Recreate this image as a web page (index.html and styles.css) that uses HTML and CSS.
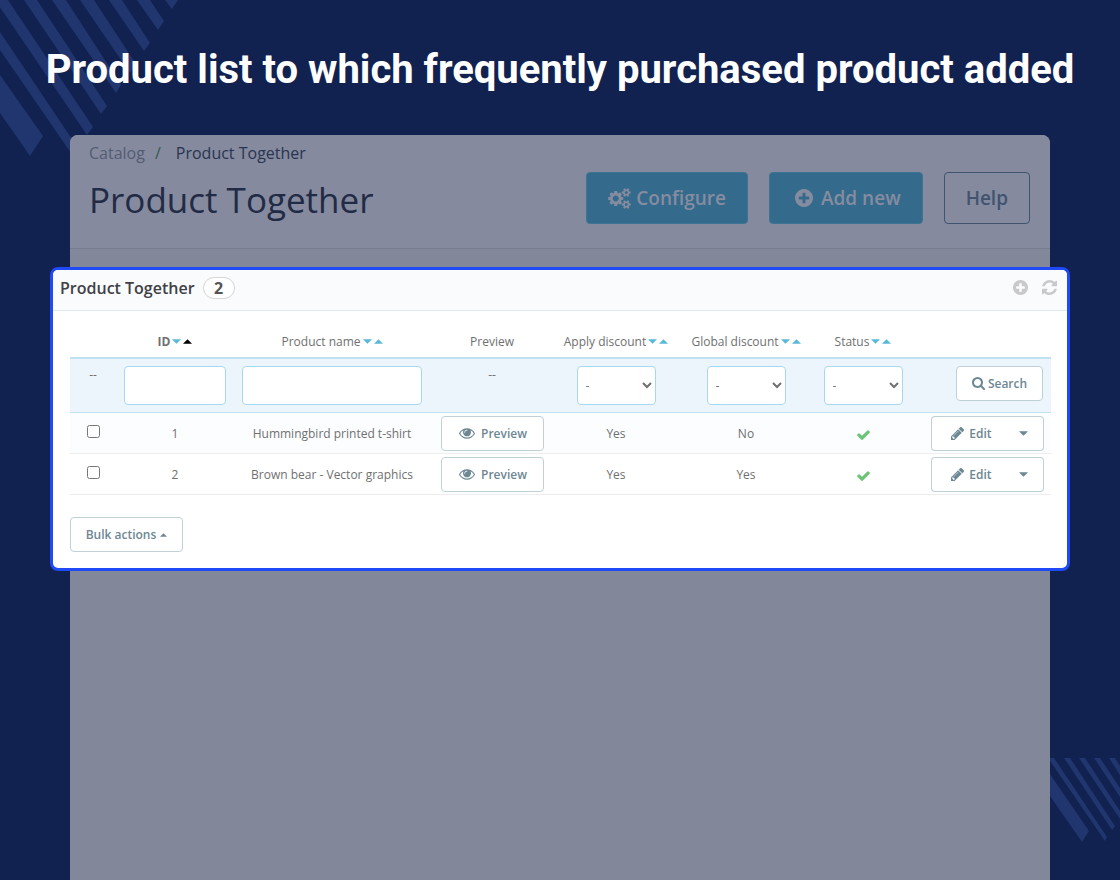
FILE: index.html
```html
<!DOCTYPE html>
<html lang="en">
<head>
<meta charset="utf-8">
<meta name="viewport" content="width=device-width, initial-scale=1">
<title>Product Together</title>
<link rel="stylesheet" href="styles.css">
</head>
<body>
<svg class="defs" width="0" height="0" aria-hidden="true">
  <symbol id="cogs" viewBox="0 0 1920 1792"><path d="M896 896q0-106-75-181t-181-75-181 75-75 181 75 181 181 75 181-75 75-181zm768 512q0-52-38-90t-90-38-90 38-38 90q0 53 37.500 90.500t90.500 37.500 90.500-37.500 37.500-90.500zm0-1024q0-52-38-90t-90-38-90 38-38 90q0 53 37.500 90.500t90.500 37.500 90.500-37.500 37.500-90.500zm-384 421v185q0 10-7 19.500t-16 10.500l-155 24q-11 35-32 76 34 48 90 115 7 11 7 20 0 12-7 19-23 30-82.500 89.500t-78.500 59.500q-11 0-21-7l-115-90q-37 19-77 31-11 108-23 155-7 24-30 24h-186q-11 0-20-7.500t-10-17.500l-23-153q-34-10-75-31l-118 89q-7 7-20 7-11 0-21-8-144-133-144-160 0-9 7-19 10-14 41-53t47-61q-23-44-35-82l-152-24q-10-1-17-9.500t-7-19.500v-185q0-10 7-19.500t16-10.500l155-24q11-35 32-76-34-48-90-115-7-11-7-20 0-12 7-20 22-30 82-89t79-59q11 0 21 7l115 90q34-18 77-32 11-108 23-154 7-24 30-24h186q11 0 20 7.500t10 17.500l23 153q34 10 75 31l118-89q8-7 20-7 11 0 21 8 144 133 144 160 0 8-7 19-12 16-42 54t-45 60q23 48 34 82l152 23q10 2 17 10.500t7 19.500zm640 533v140q0 16-149 31-12 27-30 52 51 113 51 138 0 4-4 7-122 71-124 71-8 0-46-47t-52-68q-20 2-30 2t-30-2q-14 21-52 68t-46 47q-2 0-124-71-4-3-4-7 0-25 51-138-18-25-30-52-149-15-149-31v-140q0-16 149-31 13-29 30-52-51-113-51-138 0-4 4-7 4-2 35-20t59-34 30-16q8 0 46 46.500t52 67.500q20-2 30-2t30 2q51-71 92-112l6-2q4 0 124 70 4 3 4 7 0 25-51 138 17 23 30 52 149 15 149 31zm0-1024v140q0 16-149 31-12 27-30 52 51 113 51 138 0 4-4 7-122 71-124 71-8 0-46-47t-52-68q-20 2-30 2t-30-2q-14 21-52 68t-46 47q-2 0-124-71-4-3-4-7 0-25 51-138-18-25-30-52-149-15-149-31v-140q0-16 149-31 13-29 30-52-51-113-51-138 0-4 4-7 4-2 35-20t59-34 30-16q8 0 46 46.500t52 67.500q20-2 30-2t30 2q51-71 92-112l6-2q4 0 124 70 4 3 4 7 0 25-51 138 17 23 30 52 149 15 149 31z"/></symbol>
  <symbol id="plus" viewBox="0 128 1536 1536"><path d="M1216 960v-128q0-26-19-45t-45-19h-256v-256q0-26-19-45t-45-19h-128q-26 0-45 19t-19 45v256h-256q-26 0-45 19t-19 45v128q0 26 19 45t45 19h256v256q0 26 19 45t45 19h128q26 0 45-19t19-45v-256h256q26 0 45-19t19-45zm320-64q0 209-103 385.500t-279.500 279.500-385.500 103-385.500-103-279.500-279.500-103-385.500 103-385.500 279.500-279.500 385.500-103 385.500 103 279.500 279.500 103 385.500z"/></symbol>
  <symbol id="refresh" viewBox="128 128 1536 1536"><path d="M1639 1056q0 5-1 7-64 268-268 434.500t-478 166.500q-146 0-282.500-55t-243.500-157l-129 129q-19 19-45 19t-45-19-19-45v-448q0-26 19-45t45-19h448q26 0 45 19t19 45-19 45l-137 137q71 66 161 102t187 36q134 0 250-65t186-179q11-17 53-117 8-23 30-23h192q13 0 22.500 9.500t9.500 22.500zm25-800v448q0 26-19 45t-45 19h-448q-26 0-45-19t-19-45 19-45l138-138q-148-137-349-137-134 0-250 65t-186 179q-11 17-53 117-8 23-30 23h-199q-13 0-22.500-9.500t-9.500-22.500v-7q65-268 270-434.500t480-166.500q146 0 284 55.500t245 156.500l130-129q19-19 45-19t45 19 19 45z"/></symbol>
  <symbol id="search" viewBox="64 128 1664 1664"><path d="M1216 832q0-185-131.500-316.500t-316.500-131.500-316.500 131.500-131.500 316.500 131.500 316.500 316.500 131.500 316.500-131.500 131.500-316.500zm512 832q0 52-38 90t-90 38q-54 0-90-38l-343-342q-179 124-399 124-143 0-273.500-55.500t-225-150-150-225-55.500-273.500 55.500-273.500 150-225 225-150 273.500-55.500 273.500 55.500 225 150 150 225 55.500 273.500q0 220-124 399l343 343q37 37 37 90z"/></symbol>
  <symbol id="pencil" viewBox="128 149 1515 1515"><path d="M491 1536l91-91-235-235-91 91v107h128v128h107zm523-928q0-22-22-22-10 0-17 7l-542 542q-7 7-7 17 0 22 22 22 10 0 17-7l542-542q7-7 7-17zm-54-192l416 416-832 832h-416v-416zm683 96q0 53-37 90l-166 166-416-416 166-165q36-38 90-38 53 0 91 38l235 234q37 39 37 91z"/></symbol>
  <symbol id="check" viewBox="121 310 1550 1212"><path d="M1671 566q0 40-28 68l-724 724-136 136q-28 28-68 28t-68-28l-136-136-362-362q-28-28-28-68t28-68l136-136q28-28 68-28t68 28l294 295 656-657q28-28 68-28t68 28l136 136q28 28 28 68z"/></symbol>
  <symbol id="eye" viewBox="0 384 1792 1152"><path d="M1664 960q-152-236-381-353 61 104 61 225 0 185-131.500 316.500t-316.500 131.500-316.500-131.500-131.500-316.500q0-121 61-225-229 117-381 353 133 205 333.500 326.500t434.500 121.500 434.500-121.500 333.500-326.500zm-720-384q0-20-14-34t-34-14q-125 0-214.500 89.500t-89.500 214.500q0 20 14 34t34 14 34-14 14-34q0-86 61-147t147-61q20 0 34-14t14-34zm848 384q0 34-20 69-140 230-376.500 368.500t-499.500 138.500-499.500-139-376.500-368q-20-35-20-69t20-69q140-229 376.500-368t499.500-139 499.500 139 376.500 368q20 35 20 69z"/></symbol>
  <symbol id="down" viewBox="0 0 10 5"><path d="M0 0h10L5 5z"/></symbol>
  <symbol id="up" viewBox="0 0 10 5"><path d="M0 5h10L5 0z"/></symbol>
</svg>

<svg class="stripes stripes-top" width="180" height="160" aria-hidden="true">
  <path d="M165 0h13l-6 9zM137 0h13l14 21-6 9zM109 0h13l28 43-6 8zM80 0h14l42 64-6 9zM52 0h14l55 85-5 8zM24 0h13l70 106-6 8zM-5 0H8l85 127-6 8zM0 32l78 116-5 8L0 50zM0 75l43 61-13 20L0 113z"/>
</svg>
<svg class="stripes stripes-bottom" width="70" height="122" aria-hidden="true">
  <path d="M0 16l39 57-7 11L0 38zM-2 0h6l53 79-2 4zM14 0h6l45 68-3 4zM29 0h6l35 53v8zM44 0h6l20 30v9zM59 0h6l5 8v9z"/>
</svg>

<h1 class="headline">Product list to which frequently purchased product added</h1>

<main class="screen">
  <header class="page-head">
    <nav class="crumbs" aria-label="Breadcrumb">
      <a class="crumb" href="#catalog">Catalog</a><span class="slash">/</span><span>Product Together</span>
    </nav>
    <div class="title-row">
      <h2 class="page-title">Product Together</h2>
      <div class="actions">
        <button class="btn-main configure" type="button"><svg class="icon-cogs"><use href="#cogs"/></svg>Configure</button>
        <button class="btn-main add" type="button"><svg class="icon-add"><use href="#plus"/></svg>Add new</button>
        <button class="btn-main help" type="button">Help</button>
      </div>
    </div>
  </header>

  <section class="card">
    <div class="card-head">
      <h3 class="card-title">Product Together</h3>
      <span class="count">2</span>
      <div class="tools">
        <button class="tool" type="button" aria-label="Add new"><svg class="icon-tool"><use href="#plus"/></svg></button>
        <button class="tool" type="button" aria-label="Refresh list"><svg class="icon-tool"><use href="#refresh"/></svg></button>
      </div>
    </div>
    <div class="card-body">
      <table class="list">
        <colgroup>
          <col class="c-check"><col class="c-id"><col class="c-name"><col class="c-preview"><col class="c-apply"><col class="c-global"><col class="c-status"><col class="c-actions">
        </colgroup>
        <thead>
          <tr class="labels">
            <td></td>
            <th scope="col" class="sorted"><span class="sort">ID <svg class="caret"><use href="#down"/></svg><svg class="caret active"><use href="#up"/></svg></span></th>
            <th scope="col"><span class="sort">Product name <svg class="caret"><use href="#down"/></svg><svg class="caret"><use href="#up"/></svg></span></th>
            <th scope="col">Preview</th>
            <th scope="col"><span class="sort">Apply discount <svg class="caret"><use href="#down"/></svg><svg class="caret"><use href="#up"/></svg></span></th>
            <th scope="col"><span class="sort">Global discount <svg class="caret"><use href="#down"/></svg><svg class="caret"><use href="#up"/></svg></span></th>
            <th scope="col"><span class="sort">Status <svg class="caret"><use href="#down"/></svg><svg class="caret"><use href="#up"/></svg></span></th>
            <td></td>
          </tr>
          <tr class="filters">
            <td>--</td>
            <td><input class="field" type="text" aria-label="Filter by ID"></td>
            <td><input class="field" type="text" aria-label="Filter by product name"></td>
            <td>--</td>
            <td><select class="field pick" aria-label="Filter by apply discount"><option>-</option><option>Yes</option><option>No</option></select></td>
            <td><select class="field pick" aria-label="Filter by global discount"><option>-</option><option>Yes</option><option>No</option></select></td>
            <td><select class="field pick" aria-label="Filter by status"><option>-</option><option>Yes</option><option>No</option></select></td>
            <td class="end"><button class="btn search" type="button"><svg class="icon-search"><use href="#search"/></svg>Search</button></td>
          </tr>
        </thead>
        <tbody>
          <tr>
            <td><input class="tick" type="checkbox" aria-label="Select item 1"></td>
            <td>1</td>
            <td>Hummingbird printed t-shirt</td>
            <td><button class="btn preview" type="button"><svg class="icon-eye"><use href="#eye"/></svg>Preview</button></td>
            <td>Yes</td>
            <td>No</td>
            <td><svg class="icon-check" role="img" aria-label="Enabled"><use href="#check"/></svg></td>
            <td class="end"><div class="split"><button class="btn edit" type="button"><svg class="icon-pencil"><use href="#pencil"/></svg>Edit</button><button class="btn toggle" type="button" aria-label="More actions"><svg class="caret"><use href="#down"/></svg></button></div></td>
          </tr>
          <tr>
            <td><input class="tick" type="checkbox" aria-label="Select item 2"></td>
            <td>2</td>
            <td>Brown bear - Vector graphics</td>
            <td><button class="btn preview" type="button"><svg class="icon-eye"><use href="#eye"/></svg>Preview</button></td>
            <td>Yes</td>
            <td>Yes</td>
            <td><svg class="icon-check" role="img" aria-label="Enabled"><use href="#check"/></svg></td>
            <td class="end"><div class="split"><button class="btn edit" type="button"><svg class="icon-pencil"><use href="#pencil"/></svg>Edit</button><button class="btn toggle" type="button" aria-label="More actions"><svg class="caret"><use href="#down"/></svg></button></div></td>
          </tr>
        </tbody>
      </table>
      <button class="btn bulk" type="button">Bulk actions <svg class="caret small"><use href="#up"/></svg></button>
    </div>
  </section>
</main>
</body>
</html>
```

FILE: styles.css
```css
* { box-sizing: border-box; }

body {
  margin: 0;
  min-height: 100vh;
  display: flex;
  flex-direction: column;
  position: relative;
  background: #112150;
  font-family: "Open Sans", "Noto Sans", sans-serif;
  font-size: 12px;
  color: #707070;
}

h1, h2, h3 { margin: 0; }

button, input, select { font: inherit; color: inherit; }

button { cursor: pointer; }

svg { fill: currentColor; flex: none; }

.defs { position: absolute; }

/* Decorative corners */
.stripes { position: absolute; color: #21366f; }
.stripes-top { left: 0; top: 0; }
.stripes-bottom { right: 0; bottom: 0; }

.headline {
  position: relative;
  padding: 46px 20px 41px;
  font: 700 40px/48px Roboto, sans-serif;
  color: #fff;
  text-align: center;
}

/* Dimmed page behind the card */
.screen {
  position: relative;
  flex: 1;
  margin: 0 70px;
  border-radius: 8px 8px 0 0;
  background: #828799;
}

.page-head {
  padding: 7px 20px 24px 19px;
  border-radius: 8px 8px 0 0;
  border-bottom: 1px solid #777c90;
  background: #858a9e;
}

.crumbs {
  display: flex;
  font-size: 16px;
  line-height: 22px;
  color: #2a3450;
}

.crumb { color: #525d74; text-decoration: none; }
.slash { margin: 0 15px 0 10px; color: #335a50; }

.title-row {
  display: flex;
  justify-content: space-between;
  align-items: center;
  margin-top: 8px;
}

.page-title {
  padding-top: 4px;
  font-size: 35px;
  font-weight: 400;
  line-height: 48px;
  color: #222b45;
}

.actions { display: flex; gap: 21px; }

.btn-main {
  display: flex;
  align-items: center;
  height: 52px;
  padding: 0 21px;
  border: 1px solid #3d7494;
  border-radius: 4px;
  background: #346a8c;
  font-size: 19px;
  font-weight: 600;
  color: #868ca0;
}

.configure { gap: 5px; }
.add { gap: 8px; padding-left: 25px; }
.help { border-color: #40546f; background: none; color: #40546f; }

.icon-cogs { width: 23px; height: 21px; }
.icon-add { width: 18px; height: 18px; }

/* Highlighted card */
.card {
  margin: 18px -20px 0;
  border: 3px solid #1f4af5;
  border-radius: 8px;
  background: #fff;
  overflow: hidden;
}

.card-head {
  display: flex;
  align-items: center;
  height: 41px;
  padding: 0 10px 4px 7px;
  border-bottom: 1px solid #dfe9ee;
  background: #fafbfd;
}

.card-title {
  font-size: 16px;
  font-weight: 600;
  color: #3f4147;
}

.count {
  margin-left: 8px;
  width: 32px;
  height: 22px;
  border: 1px solid #d6d6d6;
  border-radius: 11px;
  background: #fff;
  font-size: 16px;
  font-weight: 700;
  line-height: 20px;
  text-align: center;
  color: #555;
}

.tools { display: flex; gap: 14px; margin-left: auto; padding-bottom: 2px; }

.tool {
  display: flex;
  padding: 0;
  border: 0;
  background: none;
  color: #c9c9c9;
}

.icon-tool { width: 15px; height: 15px; }

.card-body { padding: 16px 16px 16px 17px; }

.list {
  width: 100%;
  border-collapse: separate;
  border-spacing: 0;
  table-layout: fixed;
  text-align: center;
}

.list td, .list th { padding: 0; }

.c-check { width: 46px; }
.c-id { width: 118px; }
.c-preview { width: 124px; }
.c-apply { width: 124px; }
.c-global { width: 136px; }
.c-status { width: 98px; }
.c-actions { width: 139px; }

.list .labels th, .list .labels td {
  height: 32px;
  padding-bottom: 2px;
  border-bottom: 2px solid #bfe1f2;
  font-weight: 400;
}

.list .labels .sorted { font-weight: 700; }

.sort { display: flex; justify-content: center; align-items: center; gap: 2px; }

.caret { width: 9px; height: 5px; color: #57b9d9; }
.active { color: #000; }

.list .filters td {
  padding: 7px 8px;
  border-bottom: 1px solid #bfe1f2;
  background: #ecf5fb;
  vertical-align: top;
}

.field {
  display: block;
  width: 100%;
  height: 39px;
  padding: 0 8px;
  border: 1px solid #a6d8f0;
  border-radius: 4px;
  background: #fff;
}

.pick { width: 79px; padding: 0 4px; margin: 0 auto; }

.btn {
  display: flex;
  align-items: center;
  justify-content: center;
  height: 35px;
  border: 1px solid #bfd0d7;
  border-radius: 4px;
  padding: 0;
  background: #fff;
  font-weight: 600;
  color: #6d8793;
}

.search { width: 87px; margin-left: auto; gap: 3px; }

.list tbody td {
  height: 41px;
  border-bottom: 1px solid #ededed;
}

.list tbody tr:first-child td { background: #fbfdff; }

.list tbody .end { padding-right: 7px; }

.tick { display: block; margin: 0 auto 4px; width: 13px; height: 13px; }

.preview { width: 103px; margin: 0 auto; padding-left: 2px; gap: 6px; }

.split { display: flex; justify-content: flex-end; }

.edit {
  width: 76px;
  padding-left: 4px;
  gap: 5px;
  border-right: 0;
  border-radius: 4px 0 0 4px;
}

.toggle {
  width: 37px;
  padding-right: 4px;
  border-left: 0;
  border-radius: 0 4px 4px 0;
}

.btn .caret { color: inherit; }
.btn .small { width: 7px; height: 4px; }

.icon-search { width: 13px; height: 13px; }
.icon-eye { width: 16px; height: 11px; }
.icon-pencil { width: 13px; height: 13px; }
.icon-check { display: block; width: 13px; height: 10px; margin: 3px auto 0; color: #6cc576; }

.bulk { width: 113px; margin-top: 22px; gap: 4px; }
```
